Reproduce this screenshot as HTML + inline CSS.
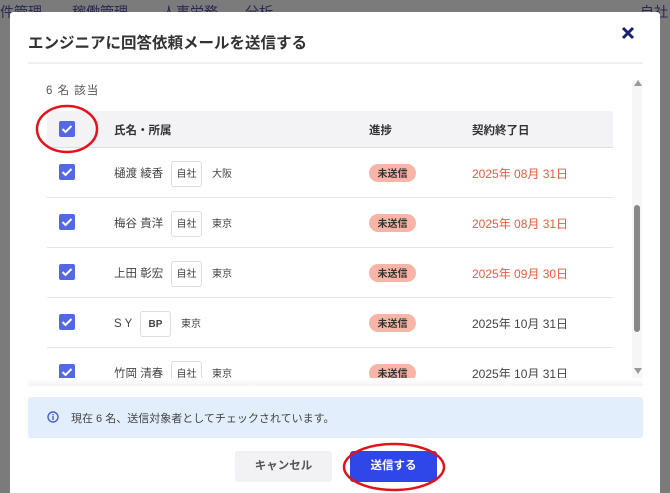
<!DOCTYPE html><html><head><meta charset="utf-8"><style>
*{margin:0;padding:0;box-sizing:border-box}
html,body{width:670px;height:493px;overflow:hidden}
body{background:#7b7b7b;font-family:"Liberation Sans","Noto Sans CJK JP",sans-serif;position:relative;color:#333}
.bg{position:absolute;color:#2a2a50;font-size:14px}
.modal{position:absolute;left:10px;top:12px;width:650px;height:481px;background:#fff;border-radius:3px 3px 0 0}
.abs{position:absolute}
.cb{position:absolute;width:16px;height:16px;background:#5468e6;border-radius:2px}
.cb svg{position:absolute;left:2px;top:3px}
.row{position:absolute;left:37px;width:566px;height:50px;border-bottom:1px solid #e6e6e6}
.name{position:absolute;left:67px;top:18px;font-size:11.5px;line-height:16px;color:#444}
.tag{position:absolute;top:13px;width:31px;height:26px;border:1px solid #ddd;border-radius:3px;font-size:10px;display:flex;align-items:center;justify-content:center;padding-bottom:3px;color:#444}
.loc{position:absolute;top:19px;font-size:10px;line-height:16px;color:#444}
.pill{position:absolute;left:322px;top:16px;width:47px;height:18px;border-radius:9px;background:#f8b4a6;font-size:10px;font-weight:bold;display:flex;align-items:center;justify-content:center;padding-bottom:2px;color:#333}
.date{position:absolute;left:425px;top:18px;font-size:12px;line-height:16px;color:#444}
.red{color:#f0593a}
</style></head><body>
<div class="bg" style="left:0;top:2px">件管理</div>
<div class="bg" style="left:72px;top:2px">稼働管理</div>
<div class="bg" style="left:162px;top:2px">人事労務</div>
<div class="bg" style="left:245px;top:2px">分析</div>
<div class="bg" style="left:640px;top:2px">自社</div>
<div class="modal">
<div class="abs" style="left:18px;top:19px;font-size:15.5px;font-weight:bold;color:#333">エンジニアに回答依頼メールを送信する</div>
<svg class="abs" style="left:611px;top:14px" width="14" height="14" viewBox="0 0 14 14"><path d="M2 2L12 12M12 2L2 12" stroke="#1a2170" stroke-width="3"/></svg>
<div class="abs" style="left:18px;top:50px;width:615px;height:2px;background:#f0f0f0"></div>
<div class="abs" style="left:36px;top:70px;font-size:11.5px;color:#555;letter-spacing:1px">6 名 該当</div>
<div class="abs" style="left:37px;top:99px;width:566px;height:37px;background:#f3f3f6;border-bottom:1px solid #e0e0e0"></div>
<div class="cb" style="left:49px;top:109px"><svg width="12" height="10"><path d="M1.5 5L4.5 8L10.5 2" stroke="#fff" stroke-width="2" fill="none"/></svg></div>
<div class="abs" style="left:104px;top:110px;font-size:11.5px;font-weight:bold">氏名・所属</div>
<div class="abs" style="left:359px;top:110px;font-size:11.5px;font-weight:bold">進捗</div>
<div class="abs" style="left:462px;top:110px;font-size:11.5px;font-weight:bold">契約終了日</div>
<div class="abs" style="left:37px;top:136px;width:566px;height:230px;overflow:hidden">
<div class="row" style="top:0;left:0"><div class="cb" style="left:12px;top:16px"><svg width="12" height="10"><path d="M1.5 5L4.5 8L10.5 2" stroke="#fff" stroke-width="2" fill="none"/></svg></div><div class="name">樋渡 綾香</div><div class="tag" style="left:124px">自社</div><div class="loc" style="left:165px">大阪</div><div class="pill">未送信</div><div class="date red">2025年 08月 31日</div></div>
<div class="row" style="top:50px;left:0"><div class="cb" style="left:12px;top:16px"><svg width="12" height="10"><path d="M1.5 5L4.5 8L10.5 2" stroke="#fff" stroke-width="2" fill="none"/></svg></div><div class="name">梅谷 貴洋</div><div class="tag" style="left:124px">自社</div><div class="loc" style="left:165px">東京</div><div class="pill">未送信</div><div class="date red">2025年 08月 31日</div></div>
<div class="row" style="top:100px;left:0"><div class="cb" style="left:12px;top:16px"><svg width="12" height="10"><path d="M1.5 5L4.5 8L10.5 2" stroke="#fff" stroke-width="2" fill="none"/></svg></div><div class="name">上田 彰宏</div><div class="tag" style="left:124px">自社</div><div class="loc" style="left:165px">東京</div><div class="pill">未送信</div><div class="date red">2025年 09月 30日</div></div>
<div class="row" style="top:150px;left:0"><div class="cb" style="left:12px;top:16px"><svg width="12" height="10"><path d="M1.5 5L4.5 8L10.5 2" stroke="#fff" stroke-width="2" fill="none"/></svg></div><div class="name">S Y</div><div class="tag" style="left:93px;font-weight:bold;padding-bottom:0">BP</div><div class="loc" style="left:134px">東京</div><div class="pill">未送信</div><div class="date">2025年 10月 31日</div></div>
<div class="row" style="top:200px;left:0"><div class="cb" style="left:12px;top:16px"><svg width="12" height="10"><path d="M1.5 5L4.5 8L10.5 2" stroke="#fff" stroke-width="2" fill="none"/></svg></div><div class="name">竹岡 清春</div><div class="tag" style="left:124px">自社</div><div class="loc" style="left:165px">東京</div><div class="pill">未送信</div><div class="date">2025年 10月 31日</div></div>
</div>
<div class="abs" style="left:18px;top:366px;width:615px;height:8px;background:linear-gradient(#fff0,#f4f4f4)"></div>
<div class="abs" style="left:622px;top:68px;width:10px;height:298px;background:#f6f6f6"></div>
<div class="abs" style="left:624px;top:68px;width:0;height:0;border-left:4px solid transparent;border-right:4px solid transparent;border-bottom:6px solid #999"></div>
<div class="abs" style="left:624px;top:356px;width:0;height:0;border-left:4px solid transparent;border-right:4px solid transparent;border-top:6px solid #999"></div>
<div class="abs" style="left:624px;top:193px;width:6px;height:127px;background:#888;border-radius:3px"></div>
<div class="abs" style="left:18px;top:385px;width:615px;height:41px;background:#e3eefc;border-radius:3px"></div>
<svg class="abs" style="left:37px;top:399px" width="12" height="12" viewBox="0 0 12 12"><circle cx="6" cy="6" r="5" fill="none" stroke="#4a5ee0" stroke-width="1.4"/><rect x="5.3" y="5" width="1.4" height="4" fill="#4a5ee0"/><rect x="5.3" y="3" width="1.4" height="1.3" fill="#4a5ee0"/></svg>
<div class="abs" style="left:61px;top:398px;font-size:11px;color:#444">現在 6 名、送信対象者としてチェックされています。</div>
<div class="abs" style="left:225px;top:439px;width:97px;height:31px;background:#f2f2f4;border-radius:3px;font-size:11.5px;font-weight:bold;color:#555;text-align:center;line-height:31px">キャンセル</div>
<div class="abs" style="left:340px;top:439px;width:87px;height:31px;background:#2f46e8;border-radius:3px;font-size:11.5px;font-weight:bold;color:#fff;text-align:center;line-height:31px">送信する</div>
</div>
<svg class="abs" style="left:0;top:0" width="670" height="493"><ellipse cx="67" cy="129" rx="30" ry="23" fill="none" stroke="#e3121b" stroke-width="2.5"/><ellipse cx="394" cy="467" rx="50" ry="23" fill="none" stroke="#e3121b" stroke-width="2.5"/></svg>
</body></html>
